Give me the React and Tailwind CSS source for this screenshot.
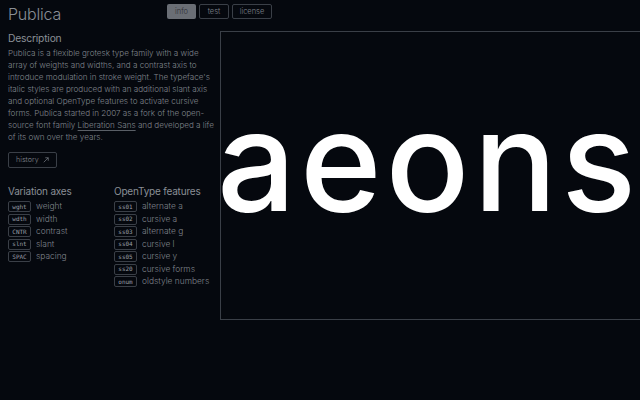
export default function App() {
  const axes = [
    ["wght", "weight"],
    ["wdth", "width"],
    ["CNTR", "contrast"],
    ["slnt", "slant"],
    ["SPAC", "spacing"],
  ];
  const feats = [
    ["ss01", "alternate a"],
    ["ss02", "cursive a"],
    ["ss03", "alternate g"],
    ["ss04", "cursive l"],
    ["ss05", "cursive y"],
    ["ss20", "cursive forms"],
    ["onum", "oldstyle numbers"],
  ];
  const lines = [
    "Publica is a flexible grotesk type family with a wide",
    "array of weights and widths, and a contrast axis to",
    "introduce modulation in stroke weight. The typeface's",
    "italic styles are produced with an additional slant axis",
    "and optional OpenType features to activate cursive",
    "forms. Publica started in 2007 as a fork of the open-",
  ];
  const Tag = ({ t }) => (
    <span className="inline-flex items-center justify-center w-[23px] h-[11px] border border-[#3a3f47] rounded-[2px] text-[6px] leading-none text-[#9a9fa7] font-['DejaVu_Sans_Mono',monospace]">
      {t}
    </span>
  );
  return (
    <div className="w-[640px] h-[400px] bg-[#05080e] text-[#80858d] font-['Inter',sans-serif] font-light flex overflow-hidden">
      <div className="w-[220px] shrink-0 pl-2 pt-[3px]">
        <div className="text-[16px] leading-[22px] text-[#8a8f96] tracking-[-0.2px]">Publica</div>
        <div className="mt-[6px] text-[10.3px] leading-[14px] text-[#8a8f96] font-normal tracking-[-0.2px]">Description</div>
        <div className="mt-[2px] text-[8.1px] leading-[12px] whitespace-nowrap">
          {lines.map((l) => (
            <div key={l}>{l}</div>
          ))}
          <div>
            source font family <span className="underline decoration-[#5a5f66] underline-offset-2">Liberation Sans</span> and developed a life
          </div>
          <div>of its own over the years.</div>
        </div>
        <div className="mt-[9px] inline-flex items-center gap-[4px] border border-[#3a3f47] rounded-[2px] h-[16px] px-[7px] text-[7.2px]">
          <span>history</span>
          <svg width="6" height="6" viewBox="0 0 8 8" fill="none" stroke="currentColor" strokeWidth="0.9" className="shrink-0">
            <path d="M1 7L7 1M3 1H7V5" />
          </svg>
        </div>
        <div className="mt-[16px] flex">
          <div className="w-[106px]">
            <div className="text-[10px] leading-[14px] text-[#8a8f96] font-normal tracking-[-0.2px]">Variation axes</div>
            <div className="mt-[3px] flex flex-col gap-[1.5px]">
              {axes.map(([t, l]) => (
                <div key={t} className="flex items-center gap-[5px] h-[11px] text-[8.4px]">
                  <Tag t={t} />
                  <span>{l}</span>
                </div>
              ))}
            </div>
          </div>
          <div>
            <div className="text-[10px] leading-[14px] text-[#8a8f96] font-normal tracking-[-0.2px]">OpenType features</div>
            <div className="mt-[3px] flex flex-col gap-[1.5px]">
              {feats.map(([t, l]) => (
                <div key={t} className="flex items-center gap-[5px] h-[11px] text-[8.4px]">
                  <Tag t={t} />
                  <span>{l}</span>
                </div>
              ))}
            </div>
          </div>
        </div>
      </div>
      <div className="flex-1 flex flex-col pr-[9px]">
        <div className="h-[31px] flex items-start pt-[4px] gap-[3px] -ml-[53px]">
          <div className="h-[15px] w-[29px] justify-center flex items-center rounded-[2px] bg-[#6a6e75] text-[#2a2d33] text-[7.5px]">info</div>
          <div className="h-[15px] w-[30px] justify-center flex items-center rounded-[2px] border border-[#3a3f47] text-[7.5px]">test</div>
          <div className="h-[15px] w-[40px] justify-center flex items-center rounded-[2px] border border-[#3a3f47] text-[7.5px]">license</div>
        </div>
        <div className="h-[289px] border border-[#3a3f47] flex items-center justify-center">
          <span className="text-[139px] leading-none text-white font-medium whitespace-nowrap -mt-[30px] tracking-[4px] -translate-x-[4px]">aeons</span>
        </div>
      </div>
    </div>
  );
}
